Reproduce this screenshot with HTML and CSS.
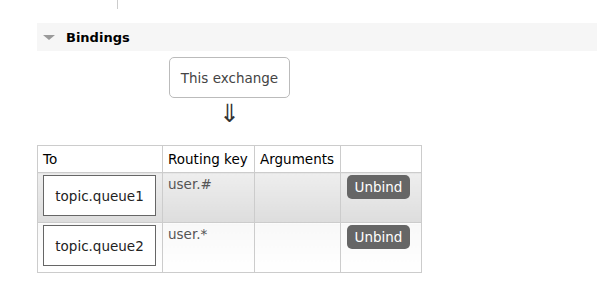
FILE: index.html
```html
<!DOCTYPE html>
<html lang="en">
    <head>
        <meta charset="UTF-8">
        <meta name="viewport" content="width=device-width, initial-scale=1.0">
        <title>Exchange bindings</title>
        <link rel="stylesheet" href="styles.css">
    </head>
    <body>
        <div class="tab-stub"></div>

        <div class="section">
            <div class="section-header">
                <span class="toggle"></span>
                <h2>Bindings</h2>
            </div>

            <div class="bindings">
                <div class="this-exchange">This exchange</div>
                <div class="flow-arrow">&#8659;</div>

                <table class="list">
                    <colgroup>
                        <col class="col-to">
                        <col class="col-key">
                        <col class="col-args">
                        <col class="col-action">
                    </colgroup>
                    <thead>
                        <tr>
                            <th>To</th>
                            <th>Routing key</th>
                            <th>Arguments</th>
                            <th></th>
                        </tr>
                    </thead>
                    <tbody>
                        <tr class="alt1">
                            <td><span class="queue-box">topic.queue1</span></td>
                            <td class="key">user.#</td>
                            <td></td>
                            <td><button class="unbind-btn">Unbind</button></td>
                        </tr>
                        <tr class="alt2">
                            <td><span class="queue-box">topic.queue2</span></td>
                            <td class="key">user.*</td>
                            <td></td>
                            <td><button class="unbind-btn">Unbind</button></td>
                        </tr>
                    </tbody>
                </table>
            </div>
        </div>
    </body>
</html>
```

FILE: styles.css
```css
* {
    margin: 0;
    padding: 0;
    box-sizing: border-box;
}

body {
    font-family: 'DejaVu Sans', Verdana, sans-serif;
    font-size: 13px;
    color: #484848;
    background: #fff;
}

.tab-stub {
    margin-left: 117px;
    width: 1px;
    height: 9px;
    background: #ccc;
}

.section {
    margin: 14px 0 0 37px;
}

.section-header {
    display: flex;
    align-items: center;
    height: 28px;
    background: #f6f6f6;
    padding-left: 6px;
}

.toggle {
    width: 0;
    height: 0;
    border-left: 6px solid transparent;
    border-right: 6px solid transparent;
    border-top: 5px solid #9a9a9a;
    margin-right: 11px;
}

.section-header h2 {
    font-size: 13px;
    font-weight: bold;
    color: #000;
}

.bindings {
    display: inline-flex;
    flex-direction: column;
    align-items: center;
    padding-top: 6px;
}

.this-exchange {
    width: 121px;
    height: 41px;
    border: 1px solid #bbb;
    border-radius: 5px;
    display: flex;
    align-items: center;
    justify-content: center;
    color: #444;
    font-size: 13.5px;
}

.flow-arrow {
    font-size: 25px;
    line-height: 32px;
    height: 47px;
    color: #333;
}

table.list {
    border-collapse: collapse;
    table-layout: fixed;
    width: 384px;
}

.col-to { width: 125px; }
.col-key { width: 92px; }
.col-args { width: 86px; }
.col-action { width: 81px; }

table.list th,
table.list td {
    border: 1px solid #ccc;
    text-align: left;
    vertical-align: top;
    font-weight: normal;
    font-size: 13.5px;
}

table.list th {
    height: 27px;
    padding: 5px 5px 0;
    color: #000;
    background: #fff;
}

table.list td {
    height: 50px;
    padding: 2px 5px 0;
}

table.list td.key {
    padding-top: 3px;
    color: #555;
}

tr.alt1 td {
    background: linear-gradient(#eeeeee, #dddddd);
}

tr.alt2 td {
    background: linear-gradient(#f8f8f8, #ffffff);
}

.queue-box {
    display: flex;
    align-items: center;
    justify-content: center;
    width: 113px;
    height: 41px;
    border: 1px solid #666;
    background: #fff;
    color: #222;
}

.unbind-btn {
    font-family: inherit;
    font-size: 13.5px;
    color: #fff;
    background: #666;
    border: none;
    border-radius: 5px;
    width: 63px;
    height: 24px;
    margin-left: 1px;
}
```
